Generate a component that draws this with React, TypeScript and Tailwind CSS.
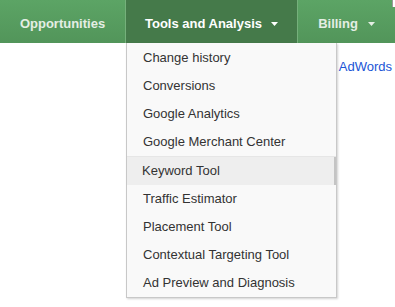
const menuItems = [
  "Change history",
  "Conversions",
  "Google Analytics",
  "Google Merchant Center",
];

const toolItems = [
  "Keyword Tool",
  "Traffic Estimator",
  "Placement Tool",
  "Contextual Targeting Tool",
  "Ad Preview and Diagnosis",
];

function Caret({ className }: { className?: string }) {
  return (
    <svg width="7" height="4" viewBox="0 0 7 4" className={className}>
      <path d="M0 0h7L3.5 4z" fill="currentColor" />
    </svg>
  );
}

export default function App() {
  return (
    <div className="relative h-[307px] w-[395px] overflow-hidden bg-white font-['Liberation_Sans',Arial,sans-serif]">
      {/* top nav */}
      <nav className="flex h-[43px] text-[13px] font-bold">
        <div className="flex w-[126px] items-center justify-center border-r border-[#75b07b] bg-gradient-to-b from-[#5ca465] to-[#52955a] pt-[5px] text-[#e4eee4]">
          Opportunities
        </div>
        <div className="flex w-[171px] items-center justify-center gap-[9px] bg-[#457a4a] pt-[5px] text-white">
          <span>Tools and Analysis</span>
          <Caret className="mt-[-1px]" />
        </div>
        <div className="flex flex-1 items-center justify-center gap-[10px] border-l border-[#75b07b] bg-gradient-to-b from-[#5ca465] to-[#52955a] pt-[5px] text-[#e4eee4]">
          <span>Billing</span>
          <Caret className="mt-[-1px]" />
        </div>
      </nav>

      {/* small corner notch */}
      <div className="absolute right-0 top-0 h-[7px] w-[3px] border-l border-[#9a9a9a] bg-white" />

      <div className="mt-[14px] flex justify-end pr-[3px] text-[13px] text-[#1a55d6]">
        AdWords
      </div>

      {/* dropdown */}
      <div className="absolute left-[126px] top-[43px] w-[211px] border-x border-b border-[#c8c8c8] bg-[#f9f9f9] pt-[1px] text-[13px] text-[#333] shadow-[1px_1px_2px_rgba(0,0,0,0.18)]">
        {menuItems.map((item) => (
          <div key={item} className="flex h-[28px] items-center pl-4">
            {item}
          </div>
        ))}
        <div className="h-px bg-[#e6e6e6]" />
        {toolItems.map((item, i) => (
          <div
            key={item}
            className={
              i === 0
                ? "flex h-[28px] items-center bg-[#eeeeee] pl-[15px] shadow-[inset_-2px_0_0_#c4c4c4]"
                : "flex h-[28px] items-center pl-4"
            }
          >
            {item}
          </div>
        ))}
      </div>
    </div>
  );
}
